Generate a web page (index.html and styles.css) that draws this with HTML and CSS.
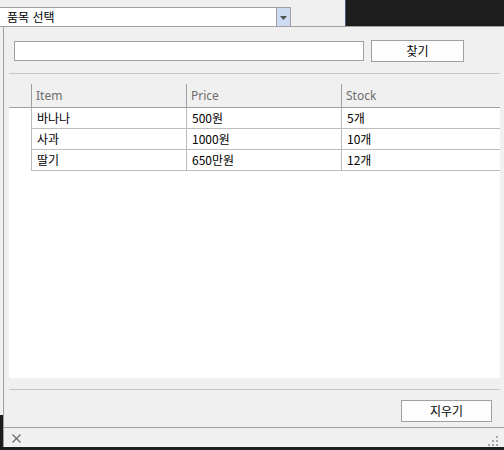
FILE: index.html
```html
<!DOCTYPE html>
<html lang="ko">
<head>
<meta charset="utf-8">
<title>품목 선택</title>
<link rel="stylesheet" href="styles.css">
</head>
<body>
<div class="topbar">
  <div class="combo-area">
    <div class="combo">
      <span class="combo-text">품목 선택</span>
      <span class="combo-btn">
        <svg width="7" height="4" viewBox="0 0 7 4"><path d="M0 0H7L3.5 4Z" fill="#505050"/></svg>
      </span>
    </div>
  </div>
  <div class="dark-panel"></div>
</div>
<div class="main">
  <div class="strip"><div class="strip-light"></div></div>
  <div class="window">
    <div class="search-row">
      <div class="textbox"></div>
      <button class="btn btn-find">찾기</button>
    </div>
    <div class="sep sep-top"></div>
    <div class="grid">
      <div class="grid-head">
        <div class="corner"></div>
        <div class="hcell">Item</div>
        <div class="hcell">Price</div>
        <div class="hcell">Stock</div>
      </div>
      <div class="grid-body">
        <div class="row"><div class="rh"></div><div class="cell">바나나</div><div class="cell">500원</div><div class="cell">5개</div></div>
        <div class="row"><div class="rh"></div><div class="cell">사과</div><div class="cell">1000원</div><div class="cell">10개</div></div>
        <div class="row"><div class="rh"></div><div class="cell">딸기</div><div class="cell">650만원</div><div class="cell">12개</div></div>
      </div>
    </div>
    <div class="sep sep-bottom"></div>
    <div class="action-row">
      <button class="btn btn-clear">지우기</button>
    </div>
    <div class="statusbar">
      <svg class="close-icon" width="9" height="9" viewBox="0 0 9 9"><path d="M0.5 0.5L8.5 8.5M8.5 0.5L0.5 8.5" stroke="#6a6a6a" stroke-width="1.2" fill="none"/></svg>
      <svg class="grip" width="12" height="12" viewBox="0 0 12 12" fill="#a8a8a8">
        <rect x="8" y="0" width="2" height="2"/>
        <rect x="4" y="4" width="2" height="2"/><rect x="8" y="4" width="2" height="2"/>
        <rect x="0" y="8" width="2" height="2"/><rect x="4" y="8" width="2" height="2"/><rect x="8" y="8" width="2" height="2"/>
      </svg>
    </div>
  </div>
</div>
</body>
</html>
```

FILE: styles.css
```css
html, body {
  margin: 0;
  padding: 0;
}
body {
  width: 504px;
  height: 450px;
  overflow: hidden;
  background: #1e1e1e;
  font-family: "Noto Sans CJK KR", "Noto Sans", sans-serif;
  font-size: 12px;
  color: #000;
}
.topbar {
  display: flex;
  height: 26px;
  border-bottom: 1px solid #a0a0a0;
}
.combo-area {
  width: 345px;
  background: #f0f0f0;
  padding-top: 7px;
  box-sizing: border-box;
}
.combo {
  width: 291px;
  height: 19px;
  box-sizing: border-box;
  background: #fff;
  border-top: 1px solid #a0a0a0;
  display: flex;
  align-items: center;
}
.combo-text {
  flex: 1;
  padding-left: 7px;
  line-height: 18px;
  font-size: 12px;
}
.combo-btn {
  width: 15px;
  height: 18px;
  box-sizing: border-box;
  background: #cddbf2;
  border-left: 1px solid #a0a0a0;
  border-right: 1px solid #a0a0a0;
  display: flex;
  align-items: center;
  justify-content: center;
  padding-top: 2px;
}
.dark-panel {
  flex: 1;
  background: #1e1e1e;
  border-left: 1px solid #3d5a80;
}
.main {
  display: flex;
  height: 420px;
}
.strip {
  width: 3px;
}
.strip-light {
  height: 388px;
  background: #f0f0f0;
}
.window {
  flex: 1;
  background: #f0f0f0;
  border-left: 1px solid #a0a0a0;
  display: flex;
  flex-direction: column;
}
.search-row {
  display: flex;
  align-items: center;
  margin-top: 13px;
  padding-left: 10px;
  height: 22px;
}
.textbox {
  width: 350px;
  height: 20px;
  box-sizing: border-box;
  background: #fff;
  border: 1px solid #a0a0a0;
}
.btn {
  font-family: "Noto Sans CJK KR", "Noto Sans", sans-serif;
  font-size: 12px;
  color: #000;
  background: #fdfdfd;
  border: 1px solid #a0a0a0;
  height: 22px;
  box-sizing: border-box;
  padding: 0;
  line-height: 18px;
}
.btn-find {
  width: 93px;
  margin-left: 7px;
}
.sep {
  height: 1px;
  background: #c6c6c6;
  margin: 0 4px 0 5px;
}
.sep-top {
  margin-top: 11px;
}
.grid {
  margin: 10px 4px 0 5px;
  height: 294px;
  display: flex;
  flex-direction: column;
}
.grid-head {
  display: grid;
  grid-template-columns: 22px 155px 155px 1fr;
  height: 24px;
  box-sizing: border-box;
  border-bottom: 1px solid #a0a0a0;
  background: #f0f0f0;
}
.hcell {
  border-left: 1px solid #a0a0a0;
  padding-left: 4px;
  color: #6d6d6d;
  font-family: "Noto Sans", "Noto Sans CJK KR", sans-serif;
  font-size: 12px;
  line-height: 23px;
}
.grid-body {
  flex: 1;
  background: #fff;
}
.row {
  display: grid;
  grid-template-columns: 22px 155px 155px 1fr;
  height: 21px;
}
.cell {
  border-left: 1px solid #bcbcbc;
  border-bottom: 1px solid #bcbcbc;
  padding-left: 5px;
  line-height: 20px;
  font-size: 12px;
}
.sep-bottom {
  margin-top: 11px;
}
.action-row {
  display: flex;
  justify-content: flex-end;
  padding-right: 12px;
  margin-top: 10px;
}
.btn-clear {
  width: 91px;
}
.statusbar {
  margin-top: 5px;
  border-top: 1px solid #a0a0a0;
  height: 19px;
  display: flex;
  align-items: center;
  justify-content: space-between;
}
.close-icon {
  margin-left: 8px;
  margin-top: 1px;
}
.grip {
  margin-right: 4px;
  margin-top: 8px;
}
```
